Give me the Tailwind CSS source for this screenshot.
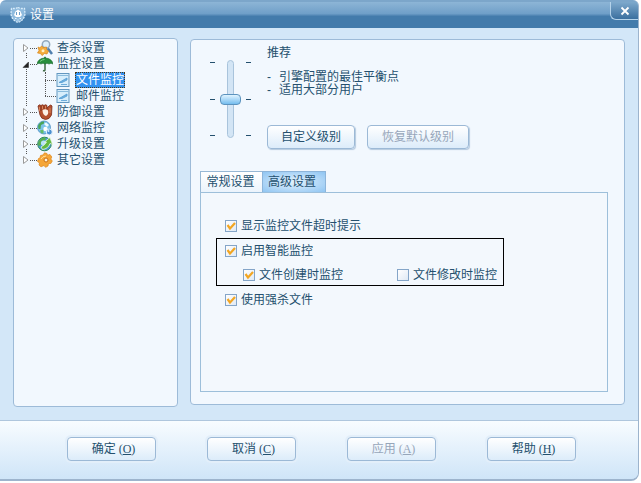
<!DOCTYPE html>
<html lang="zh-CN">
<head>
<meta charset="utf-8">
<title>设置</title>
<script src="https://cdn.jsdelivr.net/npm/@tailwindcss/browser@4"></script>
</head>
<body class="min-h-screen flex flex-col bg-white pr-0.5 pb-0.5 font-['Liberation_Sans','Noto_Sans_CJK_SC',sans-serif] text-xs leading-4 text-[#24506e]">
<div class="flex-1 flex flex-col rounded-br-lg rounded-t-md border-r border-b-2 border-[#9db4cd] bg-[#d3e7f8] overflow-hidden">
  <header class="h-7 shrink-0 flex items-center pl-2.5 border-t-2 border-[#7ca6ca] bg-linear-to-b from-[#8db5d6] from-0% via-[#6f9fc8] via-45% to-[#437bab] to-55%">
    <svg class="w-4 h-4 shrink-0" viewBox="0 0 16 16" aria-hidden="true">
      <path d="M8 0.5 10.5 1.5 14.5 1.5 15 7C14.5 11 12 14 8 15.5 4 14 1.5 11 1 7L1.5 1.5 5.5 1.5Z" fill="#8fbbde" stroke="#d8ecfa" stroke-width="1.300" stroke-dasharray="2 1"/>
      <path d="M8 2.500 10.500 4.500 12 8 10 10 6 10 4 8 5.500 4.500Z" fill="#fff"/>
      <path d="M6.500 5V8M9.500 5V8" stroke="#6d9fc9" fill="none"/>
      <path d="M5 11.500H6.500M9.500 11.500H11M7.500 13H8.500" stroke="#eaf6ff"/>
    </svg>
    <h1 class="ml-1 text-white flex-1">设置</h1>
    <button type="button" aria-label="关闭" class="self-start w-7 h-[18px] flex items-center justify-center rounded-bl-md border-l border-b border-[#b5d3ea] bg-linear-to-b from-[#7ea9cc] to-[#3b709f]">
      <svg class="w-2.5 h-2.5" viewBox="0 0 10 10" aria-hidden="true"><path d="M1.5 1.5 8.5 8.5M8.5 1.5 1.5 8.5" stroke="#fff" stroke-width="1.800"/></svg>
    </button>
  </header>

  <main class="flex-1 flex gap-3 pl-[13px] pr-[13px] pt-2.5 pb-[13px]">
    <nav class="w-[165px] shrink-0 rounded border border-[#9dbbd8] bg-[#f2f8fe] pt-px pl-2" aria-label="设置分类">
      <ul class="relative" role="tree">
        <li class="absolute left-1 top-2 h-28 border-l border-dotted border-[#555]" role="presentation"></li>
        <li class="relative" role="treeitem" aria-expanded="false">
          <div class="flex items-center h-4">
            <button type="button" aria-label="展开" class="w-2 h-2.5 bg-[#f2f8fe]"><svg class="w-2 h-2.5 block" viewBox="0 0 8 10" aria-hidden="true"><path d="M1.5 1.5 6 5 1.5 8.5Z" fill="#fff" stroke="#9a9a9a"/></svg></button>
            <span class="w-[7px] border-t border-dotted border-[#555]"></span>
            <svg class="w-4 h-4 shrink-0" viewBox="0 0 16 16" aria-hidden="true"><path d="M10.500 8 15 14" stroke="#4f7fae" stroke-width="2.500"/><circle cx="9" cy="4.500" r="3.700" fill="#dceffb" stroke="#93a9bd" stroke-width="1.500"/><path d="M1 7 3 8 4.500 6 6.500 7.500 9.500 7 9.500 9.500 11.500 11 10 14 7.500 13.500 5 15.500 3.500 13.500 0.500 13 2 10.500Z" fill="#f3ac3c" stroke="#d88416" stroke-width=".7"/><circle cx="6" cy="10.800" r="1.500" fill="#fff0c4"/></svg>
            <span class="ml-1">查杀设置</span>
          </div>
        </li>
        <li class="relative" role="treeitem" aria-expanded="true">
          <div class="flex items-center h-4">
            <button type="button" aria-label="折叠" class="w-2 h-2.5 bg-[#f2f8fe]"><svg class="w-2 h-2.5 block" viewBox="0 0 8 10" aria-hidden="true"><path d="M1 8.500 6.500 3V8.500Z" fill="#222" stroke="#222" stroke-width=".5"/></svg></button>
            <span class="w-[7px] border-t border-dotted border-[#555]"></span>
            <svg class="w-4 h-4 shrink-0" viewBox="0 0 16 16" aria-hidden="true"><path d="M8 7V13.500Q8 15.500 6 14.500" fill="none" stroke="#3f6b45" stroke-width="1.500"/><path d="M0 8Q1 2.500 7.500 2V1H8.500V2Q15 2.500 16 8 14 6.500 12 8 10 6.500 8 8 6 6.500 4 8 2 6.500 0 8Z" fill="#278e3c" stroke="#17662b" stroke-width=".6"/><path d="M3 5.500Q5 3.500 7.500 3.500" stroke="#7bd184" fill="none"/></svg>
            <span class="ml-1">监控设置</span>
          </div>
          <ul class="ml-[23px] relative" role="group">
            <li class="absolute left-0 top-0 h-6 border-l border-dotted border-[#555]" role="presentation"></li>
            <li class="flex items-center h-4" role="treeitem" aria-selected="true">
              <span class="w-[11px] border-t border-dotted border-[#555]"></span>
              <svg class="w-3.5 h-3.5 shrink-0" viewBox="0 0 14 14" aria-hidden="true"><rect x="1" y=".5" width="12" height="13" fill="#d7eefc" stroke="#6397bf"/><path d="M1.500 2.500H12.500" stroke="#8abbdc"/><path d="M3 9.500 11 5V7L6 9.500ZM5 11.500H11" fill="#6fb2e0" stroke="#559cd2" stroke-width=".8"/></svg>
              <a href="#file" class="ml-[5px] px-px bg-[#3292f0] text-white outline-1 -outline-offset-1 outline-dotted outline-[#4b3a1a]">文件监控</a>
            </li>
            <li class="flex items-center h-4" role="treeitem">
              <span class="w-[11px] border-t border-dotted border-[#555]"></span>
              <svg class="w-3.5 h-3.5 shrink-0" viewBox="0 0 14 14" aria-hidden="true"><rect x="1" y=".5" width="12" height="13" fill="#d7eefc" stroke="#6397bf"/><path d="M1.500 2.500H12.500" stroke="#8abbdc"/><path d="M3 9.500 11 5V7L6 9.500ZM5 11.500H11" fill="#6fb2e0" stroke="#559cd2" stroke-width=".8"/></svg>
              <a href="#mail" class="ml-[5px] px-px">邮件监控</a>
            </li>
          </ul>
        </li>
        <li class="relative" role="treeitem" aria-expanded="false">
          <div class="flex items-center h-4">
            <button type="button" aria-label="展开" class="w-2 h-2.5 bg-[#f2f8fe]"><svg class="w-2 h-2.5 block" viewBox="0 0 8 10" aria-hidden="true"><path d="M1.500 1.500 6 5 1.500 8.500Z" fill="#fff" stroke="#9a9a9a"/></svg></button>
            <span class="w-[7px] border-t border-dotted border-[#555]"></span>
            <svg class="w-4 h-4 shrink-0" viewBox="0 0 16 16" aria-hidden="true"><path d="M1 2Q2.500 0 4 1.500 5.500 0 7 1.500 8.500 0 10 1.500V4L12 2Q14 0 15 2L14.500 11Q12.500 15.500 8.500 15.500 4 15 3 11Z" fill="#b5512f" stroke="#7c2f1b" stroke-width=".8"/><path d="M5.500 6Q9 4.500 11 6.500 12 10 9 12 5.500 11 5.500 6Z" fill="#fdf1e6"/><path d="M4 2V7M7 2V5M10 4V5.500" stroke="#7c2f1b" stroke-width=".9"/><path d="M2.500 3V7M5.500 2V5M8.500 2V4.500M13 4V9" stroke="#dc8a5f" stroke-width=".9"/></svg>
            <span class="ml-1">防御设置</span>
          </div>
        </li>
        <li class="relative" role="treeitem" aria-expanded="false">
          <div class="flex items-center h-4">
            <button type="button" aria-label="展开" class="w-2 h-2.5 bg-[#f2f8fe]"><svg class="w-2 h-2.5 block" viewBox="0 0 8 10" aria-hidden="true"><path d="M1.500 1.500 6 5 1.500 8.500Z" fill="#fff" stroke="#9a9a9a"/></svg></button>
            <span class="w-[7px] border-t border-dotted border-[#555]"></span>
            <svg class="w-4 h-4 shrink-0" viewBox="0 0 16 16" aria-hidden="true"><circle cx="7" cy="7.500" r="6.500" fill="#7cc3ea" stroke="#3b83ba" stroke-width=".7"/><path d="M1 6Q3 1 7 1.500L7 3.500 4 5 3.500 9 1.500 9Z" fill="#48a558"/><path d="M7 4 9 2.500 12 5 10 7Z" fill="#f0fbff"/><path d="M3 10.500 6.500 9.500 6.500 13.500 4 13Z" fill="#62bb65"/><circle cx="8.500" cy="9" r="2.200" fill="#fff"/><circle cx="12.300" cy="12" r="3" fill="#4a8fd1" stroke="#e8f4fc"/><circle cx="11.500" cy="11" r="1" fill="#cfe9fb"/></svg>
            <span class="ml-1">网络监控</span>
          </div>
        </li>
        <li class="relative" role="treeitem" aria-expanded="false">
          <div class="flex items-center h-4">
            <button type="button" aria-label="展开" class="w-2 h-2.5 bg-[#f2f8fe]"><svg class="w-2 h-2.5 block" viewBox="0 0 8 10" aria-hidden="true"><path d="M1.500 1.500 6 5 1.500 8.500Z" fill="#fff" stroke="#9a9a9a"/></svg></button>
            <span class="w-[7px] border-t border-dotted border-[#555]"></span>
            <svg class="w-4 h-4 shrink-0" viewBox="0 0 16 16" aria-hidden="true"><circle cx="7.500" cy="8" r="6.800" fill="#4b9cd6" stroke="#2f8757" stroke-width="1"/><path d="M1 8Q2 2 8 1.500L9 3.500 5 5 4 9 2 10Z" fill="#56b04e"/><circle cx="6.500" cy="7" r="2.600" fill="#b7e2f7"/><path d="M4 11Q8 9 9.500 6L7.500 6 13 1.500 15.500 8.500 13 7.500Q11 13 5.500 13.500Z" fill="#62b93f" stroke="#edf9e8" stroke-width=".8"/></svg>
            <span class="ml-1">升级设置</span>
          </div>
        </li>
        <li class="relative" role="treeitem" aria-expanded="false">
          <div class="flex items-center h-4">
            <button type="button" aria-label="展开" class="w-2 h-2.5 bg-[#f2f8fe]"><svg class="w-2 h-2.5 block" viewBox="0 0 8 10" aria-hidden="true"><path d="M1.500 1.500 6 5 1.500 8.500Z" fill="#fff" stroke="#9a9a9a"/></svg></button>
            <span class="w-[7px] border-t border-dotted border-[#555]"></span>
            <svg class="w-4 h-4 shrink-0" viewBox="0 0 16 16" aria-hidden="true"><path d="M6 3 7.500 0.800 10 1.500 10.500 3.200 13 2.500 14.800 5 13.800 7 15.300 9 13.800 11.500 11.500 11.500 11 14 8.500 15.300 7 13.500 4 14.800 2 13 2.500 11 0.500 9.500 1.500 6.500 3 6 3.500 3.500Z" fill="#f5a638" stroke="#de861a" stroke-width=".7"/><path d="M4 7Q5.500 4 9 4" stroke="#ffdf97" fill="none"/><circle cx="9" cy="8" r="2" fill="#fdf3dd" stroke="#c96f10"/></svg>
            <span class="ml-1">其它设置</span>
          </div>
        </li>
      </ul>
    </nav>

    <section class="flex-1 mt-px mb-0.5 flex flex-col rounded border border-[#9dbbd8] bg-[#f2f8fe] pl-[9px] pr-4 pt-[5px] pb-3">
      <div class="flex h-[126px] shrink-0">
        <div class="flex items-start gap-[5px] pl-2.5 pt-[15px]">
          <div class="flex flex-col justify-between h-[78px] py-0.5" aria-hidden="true"><i class="w-[5px] h-px bg-[#24506e]"></i><i class="w-[5px] h-px bg-[#24506e]"></i><i class="w-[5px] h-px bg-[#24506e]"></i></div>
          <input type="range" min="0" max="2" value="1" aria-label="监控级别" class="w-[21px] h-[78px] appearance-none bg-transparent [writing-mode:vertical-lr] [&::-webkit-slider-runnable-track]:w-[7px] [&::-webkit-slider-runnable-track]:rounded-sm [&::-webkit-slider-runnable-track]:border [&::-webkit-slider-runnable-track]:border-[#a9c4dc] [&::-webkit-slider-runnable-track]:bg-[#d3e5f5] [&::-webkit-slider-thumb]:appearance-none [&::-webkit-slider-thumb]:w-[21px] [&::-webkit-slider-thumb]:h-[11px] [&::-webkit-slider-thumb]:-ml-2 [&::-webkit-slider-thumb]:rounded-sm [&::-webkit-slider-thumb]:border [&::-webkit-slider-thumb]:border-[#5c93be] [&::-webkit-slider-thumb]:bg-linear-to-b [&::-webkit-slider-thumb]:from-[#e0f4ff] [&::-webkit-slider-thumb]:to-[#74bdee]">
          <div class="flex flex-col justify-between h-[78px] py-0.5" aria-hidden="true"><i class="w-[5px] h-px bg-[#24506e]"></i><i class="w-[5px] h-px bg-[#24506e]"></i><i class="w-[5px] h-px bg-[#24506e]"></i></div>
        </div>
        <div class="flex-1 pl-4">
          <h2>推荐</h2>
          <ul class="mt-2.5 leading-[13px]">
            <li class="flex"><span class="w-3">-</span>引擎配置的最佳平衡点</li>
            <li class="flex"><span class="w-3">-</span>适用大部分用户</li>
          </ul>
          <div class="mt-7 flex gap-3">
            <button type="button" class="h-6 w-[88px] rounded border border-[#9cb9d6] bg-linear-to-b from-white to-[#dcecfa] shadow-[1px_1px_1px_#b4c9de]">自定义级别</button>
            <button type="button" disabled class="h-6 w-[102px] rounded border border-[#9cb9d6] bg-linear-to-b from-white to-[#dcecfa] text-[#97a6ba] shadow-[1px_1px_1px_#b4c9de]">恢复默认级别</button>
          </div>
        </div>
      </div>

      <div class="flex shrink-0" role="tablist">
        <button type="button" role="tab" aria-selected="false" class="w-[63px] h-[21px] pb-px pr-0.5 border border-b-0 border-[#97b8d5] bg-linear-to-b from-white to-[#ebf4fc]">常规设置</button>
        <button type="button" role="tab" aria-selected="true" class="w-16 h-[21px] -ml-px pb-px pr-1 border border-b-0 border-[#8db5da] bg-radial from-[#e3f2fd] to-[#8fc5f2]">高级设置</button>
      </div>
      <div role="tabpanel" class="flex-1 border border-[#9dbfda] bg-[#f3f8fd] pt-[25px] pl-[15px]">
        <label class="flex items-center h-4 pl-[9px]"><input type="checkbox" checked class="peer appearance-none w-3 h-3 border border-[#84a5c8] bg-linear-to-br from-white to-[#dfe9f4]"><svg class="-ml-3 mr-1 w-3 h-3 hidden peer-checked:block pointer-events-none" viewBox="0 0 12 12" aria-hidden="true"><path d="M2.500 5 5 8.500 10 3" fill="none" stroke="#f2a623" stroke-width="2.200"/></svg>显示监控文件超时提示</label>
        <div class="mt-1 h-12 w-[288px] border border-black flex flex-col gap-2 pt-1 pl-2">
          <label class="flex items-center h-4"><input type="checkbox" checked class="peer appearance-none w-3 h-3 border border-[#84a5c8] bg-linear-to-br from-white to-[#dfe9f4]"><svg class="-ml-3 mr-1 w-3 h-3 hidden peer-checked:block pointer-events-none" viewBox="0 0 12 12" aria-hidden="true"><path d="M2.500 5 5 8.500 10 3" fill="none" stroke="#f2a623" stroke-width="2.200"/></svg>启用智能监控</label>
          <div class="flex justify-between pl-[18px] pr-1.5">
            <label class="flex items-center h-4"><input type="checkbox" checked class="peer appearance-none w-3 h-3 border border-[#84a5c8] bg-linear-to-br from-white to-[#dfe9f4]"><svg class="-ml-3 mr-1 w-3 h-3 hidden peer-checked:block pointer-events-none" viewBox="0 0 12 12" aria-hidden="true"><path d="M2.500 5 5 8.500 10 3" fill="none" stroke="#f2a623" stroke-width="2.200"/></svg>文件创建时监控</label>
            <label class="flex items-center h-4"><input type="checkbox" class="appearance-none w-3 h-3 mr-1 border border-[#84a5c8] bg-linear-to-br from-white to-[#dfe9f4]">文件修改时监控</label>
          </div>
        </div>
        <label class="mt-1.5 flex items-center h-4 pl-[9px]"><input type="checkbox" checked class="peer appearance-none w-3 h-3 border border-[#84a5c8] bg-linear-to-br from-white to-[#dfe9f4]"><svg class="-ml-3 mr-1 w-3 h-3 hidden peer-checked:block pointer-events-none" viewBox="0 0 12 12" aria-hidden="true"><path d="M2.500 5 5 8.500 10 3" fill="none" stroke="#f2a623" stroke-width="2.200"/></svg>使用强杀文件</label>
      </div>
    </section>
  </main>

  <footer class="shrink-0 h-[59px] flex justify-between pt-4 pl-[67px] pr-[62px] border-t border-[#afc6dd] bg-linear-to-b from-[#f8fcff] to-[#cfe5f8] font-['Liberation_Serif','Noto_Sans_CJK_SC',serif]">
    <button type="button" class="h-6 w-[89px] pl-1 rounded border border-[#9cb9d6] bg-linear-to-b from-white to-[#dcecfa] shadow-[0_0_0_2px_#e3effa]">确定 (<u>O</u>)</button>
    <button type="button" class="h-6 w-[89px] pl-1 rounded border border-[#9cb9d6] bg-linear-to-b from-white to-[#dcecfa] shadow-[0_0_0_2px_#e3effa]">取消 (<u>C</u>)</button>
    <button type="button" disabled class="h-6 w-[89px] pl-1 rounded border border-[#9cb9d6] bg-linear-to-b from-white to-[#dcecfa] text-[#97a6ba] shadow-[0_0_0_2px_#e3effa]">应用 (<u>A</u>)</button>
    <button type="button" class="h-6 w-[89px] pl-1 rounded border border-[#9cb9d6] bg-linear-to-b from-white to-[#dcecfa] shadow-[0_0_0_2px_#e3effa]">帮助 (<u>H</u>)</button>
  </footer>
</div>
</body>
</html>
